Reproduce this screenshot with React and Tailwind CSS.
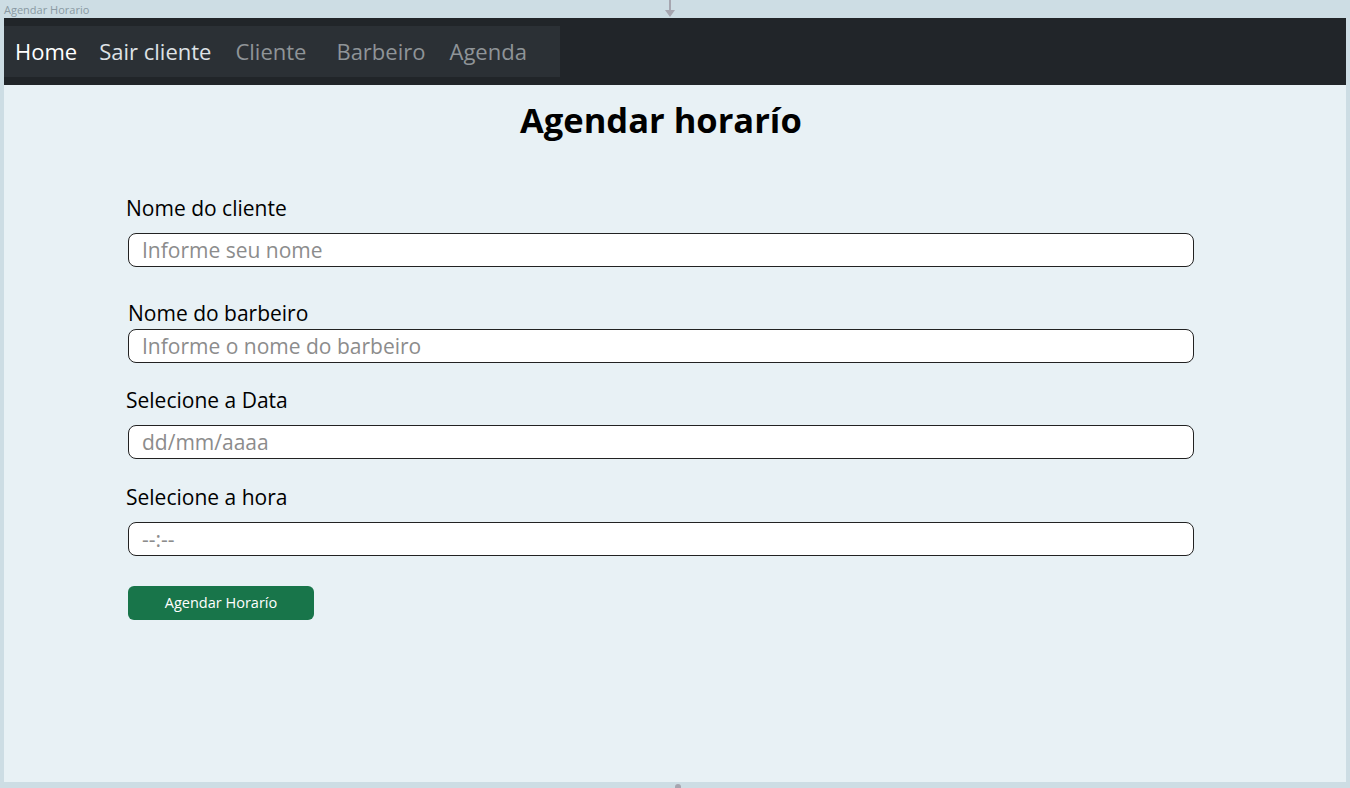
import React from 'react';

const font = { fontFamily: '"Open Sans", "Noto Sans", sans-serif' };

function Field({ label, placeholder, labelClass = 'ml-[122px]', gap = 'mt-[13px]' }) {
  return (
    <div>
      <label className={`block text-[21px] leading-[24px] text-black ${labelClass}`}>{label}</label>
      <input
        type="text"
        placeholder={placeholder}
        className={`block ${gap} ml-[124px] w-[1066px] h-[34px] rounded-[8px] border border-[#222] bg-white px-[13px] text-[21px] placeholder:text-[#8c8c8c] outline-none`}
      />
    </div>
  );
}

export default function App() {
  return (
    <div className="relative h-[788px] w-[1350px] overflow-hidden bg-[#cddde4]" style={font}>
      <div className="h-[18px] pl-[4px] pt-[3px] text-[11px] leading-[13px] text-[#8a9aa3]">Agendar Horario</div>
      <div className="absolute left-[665px] top-0 flex flex-col items-center">
        <div className="h-[10px] w-[2px] bg-[#a6a6b0]" />
        <div className="h-0 w-0 border-x-[5px] border-t-[7px] border-x-transparent border-t-[#a6a6b0]" />
      </div>

      <div className="ml-[4px] h-[764px] w-[1342px] bg-[#e8f1f5]">
        <nav className="h-[67px] bg-[#212529] pt-[8px]">
          <div className="flex h-[51px] w-[556px] items-center bg-[#2b3035] pl-[11px] text-[22px]">
            <span className="text-white">Home</span>
            <span className="ml-[22px] text-[#dee2e6]">Sair cliente</span>
            <span className="ml-[24px] text-[#8f9498]">Cliente</span>
            <span className="ml-[30px] text-[#8f9498]">Barbeiro</span>
            <span className="ml-[24px] text-[#8f9498]">Agenda</span>
          </div>
        </nav>

        <h1 className="ml-[516px] mt-[14px] text-[34.5px] font-bold leading-[42px] text-black">Agendar horarío</h1>

        <div className="mt-[55px]">
          <Field label="Nome do cliente" placeholder="Informe seu nome" />
          <div className="mt-[34px]">
            <Field label="Nome do barbeiro" placeholder="Informe o nome do barbeiro" labelClass="ml-[124px]" gap="mt-[4px]" />
          </div>
          <div className="mt-[25px]">
            <Field label="Selecione a Data" placeholder="dd/mm/aaaa" />
          </div>
          <div className="mt-[26px]">
            <Field label="Selecione a hora" placeholder="--:--" />
          </div>
          <button className="ml-[124px] mt-[30px] h-[34px] w-[186px] rounded-[6px] bg-[#18754a] text-[14.5px] text-white">
            Agendar Horarío
          </button>
        </div>
      </div>
      <div className="absolute bottom-0 left-[675px] h-[6px] w-[6px] translate-y-[2px] rounded-full bg-[#a6a6b0]" />
    </div>
  );
}
